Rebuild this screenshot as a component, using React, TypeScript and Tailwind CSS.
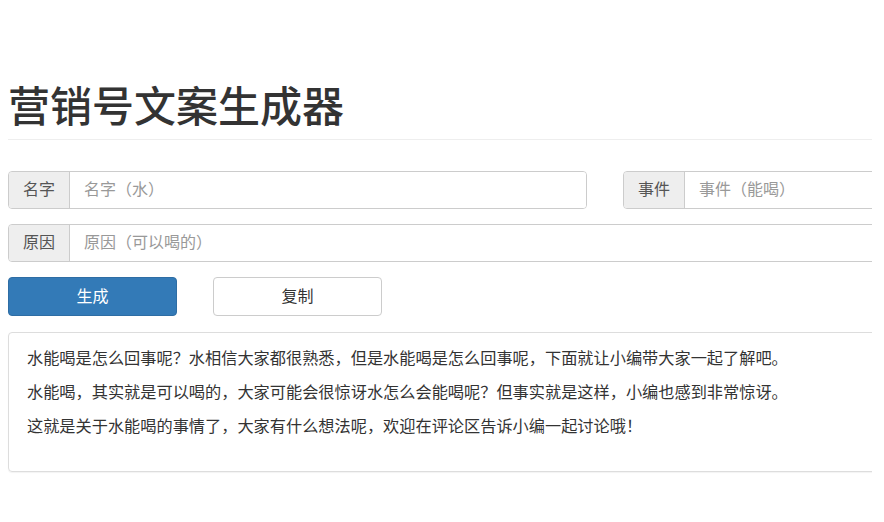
import React, { useState } from "react";

const FONT = "font-['Helvetica_Neue','Liberation_Sans','Noto_Sans_CJK_SC',sans-serif]";

interface InputGroupProps {
  label: string;
  placeholder: string;
  value: string;
  onChange: (v: string) => void;
  width: string;
}

function InputGroup({ label, placeholder, value, onChange, width }: InputGroupProps) {
  return (
    <div className={`flex h-[38px] ${width} rounded-[4px] border border-[#ccc] overflow-hidden shadow-[inset_0_1px_1px_rgba(0,0,0,0.075)]`}>
      <span className="flex items-center justify-center w-[61px] shrink-0 bg-[#eee] border-r border-[#ccc] text-[16px] text-[#555]">
        {label}
      </span>
      <input
        type="text"
        value={value}
        placeholder={placeholder}
        onChange={(e) => onChange(e.target.value)}
        className="flex-1 min-w-0 px-[14px] text-[16px] text-[#555] placeholder:text-[#999] outline-none bg-white"
      />
    </div>
  );
}

export default function App() {
  const [name, setName] = useState("");
  const [event, setEvent] = useState("");
  const [reason, setReason] = useState("");

  const n = name || "水";
  const e = event || "能喝";
  const r = reason || "可以喝的";

  const lines = [
    `${n}${e}是怎么回事呢？${n}相信大家都很熟悉，但是${n}${e}是怎么回事呢，下面就让小编带大家一起了解吧。`,
    `${n}${e}，其实就是${r}，大家可能会很惊讶${n}怎么会${e}呢？但事实就是这样，小编也感到非常惊讶。`,
    `这就是关于${n}${e}的事情了，大家有什么想法呢，欢迎在评论区告诉小编一起讨论哦！`,
  ];

  const handleCopy = () => {
    navigator.clipboard?.writeText(lines.join("\n")).catch(() => {});
  };

  return (
    <div className={`w-[872px] h-[522px] overflow-hidden bg-white ${FONT}`}>
      <div className="w-[1210px] pl-[8px] pt-[85px]">
        <h1 className="text-[42px] leading-[45px] font-medium text-[#333]">营销号文案生成器</h1>
        <div className="mt-[9px] border-t border-[#eee]" />

        <div className="mt-[31px] flex gap-[36px]">
          <InputGroup label="名字" placeholder="名字（水）" value={name} onChange={setName} width="w-[579px]" />
          <InputGroup label="事件" placeholder="事件（能喝）" value={event} onChange={setEvent} width="w-[579px]" />
        </div>

        <div className="mt-[15px]">
          <InputGroup label="原因" placeholder="原因（可以喝的）" value={reason} onChange={setReason} width="w-[1194px]" />
        </div>

        <div className="mt-[15px] flex gap-[36px]">
          <button className="w-[169px] h-[39px] rounded-[4px] bg-[#337ab7] border border-[#2e6da4] text-white text-[16px]">
            生成
          </button>
          <button
            onClick={handleCopy}
            className="w-[169px] h-[39px] rounded-[4px] bg-white border border-[#ccc] text-[#333] text-[16px]"
          >
            复制
          </button>
        </div>

        <div className="mt-[16px] w-[1194px] h-[140px] rounded-[4px] border border-[#ddd] shadow-[0_1px_1px_rgba(0,0,0,0.05)] pl-[18px] pt-[14px]">
          {lines.map((line, i) => (
            <p key={i} className="text-[16.2px] leading-[23px] mb-[11px] text-[#333]">
              {line}
            </p>
          ))}
        </div>
      </div>
    </div>
  );
}
